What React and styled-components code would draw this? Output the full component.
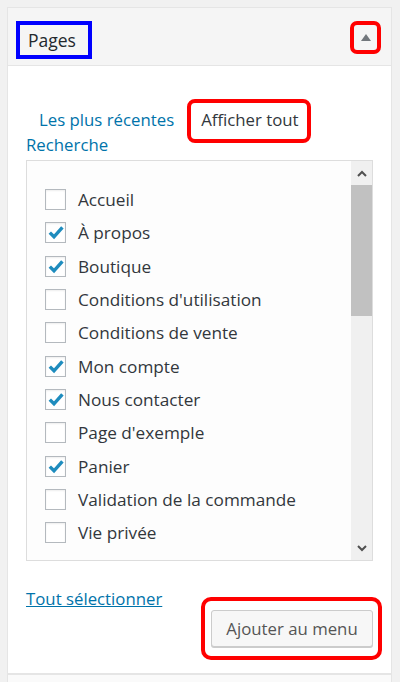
import styled, { createGlobalStyle } from "styled-components";

const GlobalStyle = createGlobalStyle`
	html, body {
		margin: 0;
		padding: 0;
		background: #f1f1f1;
		font-family: "Open Sans", "Noto Sans", sans-serif;
		color: #32373c;
	}
`;

const pages = [
	{ title: "Accueil", checked: false },
	{ title: "À propos", checked: true },
	{ title: "Boutique", checked: true },
	{ title: "Conditions d'utilisation", checked: false },
	{ title: "Conditions de vente", checked: false },
	{ title: "Mon compte", checked: true },
	{ title: "Nous contacter", checked: true },
	{ title: "Page d'exemple", checked: false },
	{ title: "Panier", checked: true },
	{ title: "Validation de la commande", checked: false },
	{ title: "Vie privée", checked: false },
];

const App = () => {
	return (
		<Page>
			<GlobalStyle />
			<Panel>
				<Header>
					<Title>Pages</Title>
					<Toggle>
						<svg width='10' height='7' viewBox='0 0 10 7'>
							<path d='M5 0 L10 7 L0 7 Z' fill='#72777c' />
						</svg>
					</Toggle>
				</Header>
				<Body>
					<Tabs>
						<Tab first>Les plus récentes</Tab>
						<Tab active>Afficher tout</Tab>
						<Tab>Recherche</Tab>
					</Tabs>
					<ListBox>
						<Checklist>
							{pages.map((p) => (
								<Item key={p.title}>
									<Box>
										{p.checked && (
											<svg width='16' height='15' viewBox='0 0 16 15'>
												<path
													d='M1.8 7.6 L6 11.8 L14.4 2.4'
													fill='none'
													stroke='#1e8cbe'
													strokeWidth='3.4'
												/>
											</svg>
										)}
									</Box>
									{p.title}
								</Item>
							))}
						</Checklist>
						<Scrollbar>
							<ScrollButton>
								<svg width='10' height='7' viewBox='0 0 10 7'>
									<path d='M1 6 L5 2 L9 6' fill='none' stroke='#505050' strokeWidth='2' />
								</svg>
							</ScrollButton>
							<Track>
								<Thumb />
							</Track>
							<ScrollButton>
								<svg width='10' height='7' viewBox='0 0 10 7'>
									<path d='M1 1 L5 5 L9 1' fill='none' stroke='#505050' strokeWidth='2' />
								</svg>
							</ScrollButton>
						</Scrollbar>
					</ListBox>
					<Footer>
						<SelectAll href='#'>Tout sélectionner</SelectAll>
						<ButtonRow>
							<AddButton>Ajouter au menu</AddButton>
						</ButtonRow>
					</Footer>
				</Body>
			</Panel>
			<NextPanel />
		</Page>
	);
};

export default App;

const Page = styled.div`
	padding: 7px 8px 0 7px;
	height: 682px;
	box-sizing: border-box;
	overflow: hidden;
`;

const Panel = styled.div`
	width: 385px;
	box-sizing: border-box;
	background: #fff;
	border: 1px solid #e5e5e5;
	border-bottom: none;
`;

const Header = styled.div`
	height: 58px;
	box-sizing: border-box;
	background: #f5f5f5;
	border-bottom: 1px solid #e5e5e5;
	display: flex;
	align-items: flex-start;
	justify-content: space-between;
	padding: 13px 10px 0 8px;
`;

const Title = styled.h3`
	margin: 0;
	width: 76px;
	height: 38px;
	box-sizing: border-box;
	border: 4px solid #0000ff;
	padding: 0 8px;
	font-size: 17.5px;
	font-weight: 400;
	line-height: 30px;
	color: #23282d;
	white-space: nowrap;
`;

const Toggle = styled.div`
	width: 31px;
	height: 33px;
	box-sizing: border-box;
	border: 4px solid #ff0000;
	border-radius: 7px;
	display: flex;
	align-items: center;
	justify-content: center;
`;

const Body = styled.div`
	padding: 41px 18px 0 18px;
`;

const Tabs = styled.div`
	display: flex;
	flex-wrap: wrap;
	width: 320px;
	column-gap: 27px;
	font-size: 16.8px;
	line-height: 25px;
`;

const Tab = styled.span`
	position: relative;
	color: ${(p) => (p.active ? "#32373c" : "#0073aa")};
	margin-left: ${(p) => (p.first ? "13px" : "0")};

	${(p) =>
		p.active &&
		`
		&::after {
			content: "";
			position: absolute;
			top: -8px;
			bottom: -11px;
			left: -14px;
			right: -12px;
			border: 4px solid #ff0000;
			border-radius: 8px;
			background: transparent;
		}
	`}
`;

const ListBox = styled.div`
	margin-top: 3px;
	height: 401px;
	box-sizing: border-box;
	border: 1px solid #dddddd;
	background: #fdfdfd;
	display: flex;
`;

const Checklist = styled.ul`
	flex: 1;
	margin: 0;
	padding: 22px 0 0 18px;
	list-style: none;
	overflow: hidden;
`;

const Item = styled.li`
	height: 33.3px;
	display: flex;
	align-items: center;
	gap: 12px;
	font-size: 17.2px;
	color: #32373c;
	white-space: nowrap;
`;

const Box = styled.span`
	width: 21px;
	height: 21px;
	flex-shrink: 0;
	box-sizing: border-box;
	border: 1px solid #b4b9be;
	background: #fff;
	box-shadow: inset 0 1px 2px rgba(0, 0, 0, 0.07);
	display: flex;
	align-items: center;
	justify-content: center;
`;

const Scrollbar = styled.div`
	width: 21px;
	flex-shrink: 0;
	background: #f0f0f0;
	display: flex;
	flex-direction: column;
`;

const ScrollButton = styled.div`
	height: 24px;
	display: flex;
	align-items: center;
	justify-content: center;
`;

const Track = styled.div`
	flex: 1;
`;

const Thumb = styled.div`
	height: 131px;
	background: #c1c1c1;
`;

const Footer = styled.div`
	padding: 27px 18px 26px;
	border-bottom: 1px solid #e5e5e5;
	margin: 0 -18px;
`;

const SelectAll = styled.a`
	display: inline-block;
	font-size: 16.8px;
	line-height: 22px;
	color: #0073aa;
	text-decoration: underline;
`;

const ButtonRow = styled.div`
	display: flex;
	justify-content: flex-end;
`;

const AddButton = styled.button`
	position: relative;
	width: 162px;
	height: 37px;
	box-sizing: border-box;
	background: #f7f7f7;
	border: 1px solid #cccccc;
	border-radius: 3px;
	box-shadow: 0 1px 0 #cccccc;
	font-family: "Open Sans", "Noto Sans", sans-serif;
	font-size: 16.8px;
	color: #555;
	padding: 0;

	&::after {
		content: "";
		position: absolute;
		top: -14px;
		bottom: -14px;
		left: -11px;
		right: -10px;
		border: 4px solid #ff0000;
		border-radius: 10px;
	}
`;

const NextPanel = styled.div`
	width: 385px;
	height: 20px;
	box-sizing: border-box;
	background: #fafafa;
	border: 1px solid #e5e5e5;
`;
